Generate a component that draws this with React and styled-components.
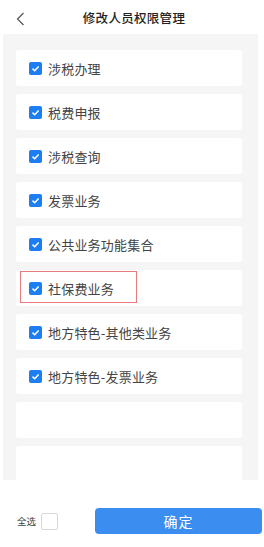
import React from "react";
import styled, { createGlobalStyle } from "styled-components";

const items = [
  { name: "涉税办理" },
  { name: "税费申报" },
  { name: "涉税查询" },
  { name: "发票业务" },
  { name: "公共业务功能集合" },
  { name: "社保费业务", marked: true },
  { name: "地方特色-其他类业务" },
  { name: "地方特色-发票业务" },
  { name: "" },
  { name: "" },
];

const App = () => {
  return (
    <>
      <GlobalStyle />
      <StyledPage>
        <StyledHeader>
          <StyledBack>
            <svg width="9" height="14" viewBox="0 0 9 14">
              <path d="M7.5 1 L1.5 7 L7.5 13" fill="none" stroke="#555" strokeWidth="1.2" />
            </svg>
          </StyledBack>
          <StyledTitle>修改人员权限管理</StyledTitle>
        </StyledHeader>
        <StyledPanel>
          {items.map((item, i) => (
            <StyledCard key={i}>
              {item.name && (
                <>
                  <StyledCheck>
                    <svg width="9" height="9" viewBox="0 0 9 9">
                      <path d="M1.5 4.6 L3.7 6.7 L7.6 2.4" fill="none" stroke="#fff" strokeWidth="1.5" />
                    </svg>
                  </StyledCheck>
                  <StyledLabel>{item.name}</StyledLabel>
                </>
              )}
              {item.marked && <StyledMark />}
            </StyledCard>
          ))}
        </StyledPanel>
        <StyledFooter>
          <StyledAllText>全选</StyledAllText>
          <StyledEmptyBox />
          <StyledButton>确定</StyledButton>
        </StyledFooter>
      </StyledPage>
    </>
  );
};

const GlobalStyle = createGlobalStyle`
  body {
    margin: 0;
    background: #ffffff;
    font-family: "Noto Sans CJK SC", "Noto Sans", sans-serif;
  }
`;

const StyledPage = styled.div`
  width: 264px;
  height: 547px;
  display: flex;
  flex-direction: column;
  overflow: hidden;
`;

const StyledHeader = styled.div`
  height: 34px;
  flex-shrink: 0;
  display: flex;
  align-items: center;
  justify-content: center;
  position: relative;
`;

const StyledBack = styled.div`
  position: absolute;
  left: 16px;
  top: 12px;
  display: flex;
`;

const StyledTitle = styled.h1`
  margin: 0;
  font-size: 12.5px;
  font-weight: 500;
  color: #222;
  letter-spacing: 0.3px;
  padding-left: 4px;
`;

const StyledPanel = styled.div`
  height: 446px;
  flex-shrink: 0;
  margin: 0 6px 0 3px;
  background: #f5f5f5;
  padding: 16px 16px 0 13px;
  box-sizing: border-box;
  display: flex;
  flex-direction: column;
  gap: 8px;
  overflow: hidden;
`;

const StyledCard = styled.div`
  height: 36px;
  flex-shrink: 0;
  background: #ffffff;
  border-radius: 3px;
  display: flex;
  align-items: center;
  padding-left: 13px;
  position: relative;
`;

const StyledCheck = styled.span`
  width: 13px;
  height: 13px;
  border-radius: 2px;
  background: #1c7ef0;
  display: flex;
  align-items: center;
  justify-content: center;
  flex-shrink: 0;
`;

const StyledLabel = styled.span`
  margin-left: 6px;
  font-size: 13px;
  color: #444;
  letter-spacing: 0.2px;
`;

const StyledMark = styled.div`
  position: absolute;
  left: 4px;
  top: 1px;
  width: 117px;
  height: 32px;
  border: 1px solid #e87b7b;
  box-sizing: border-box;
`;

const StyledFooter = styled.div`
  display: flex;
  align-items: center;
  margin-top: 28px;
  padding: 0 2px 0 17px;
`;

const StyledAllText = styled.span`
  font-size: 9.5px;
  color: #444;
`;

const StyledEmptyBox = styled.span`
  width: 17px;
  height: 17px;
  box-sizing: border-box;
  border: 1px solid #d8d8d8;
  border-radius: 2px;
  margin-left: 5px;
`;

const StyledButton = styled.button`
  margin-left: auto;
  width: 167px;
  height: 26px;
  border: none;
  border-radius: 4px;
  background: #3b8ef0;
  color: #ffffff;
  font-family: "Noto Sans CJK SC", sans-serif;
  font-size: 14px;
  letter-spacing: 1px;
  padding: 0;
`;

export default App;
